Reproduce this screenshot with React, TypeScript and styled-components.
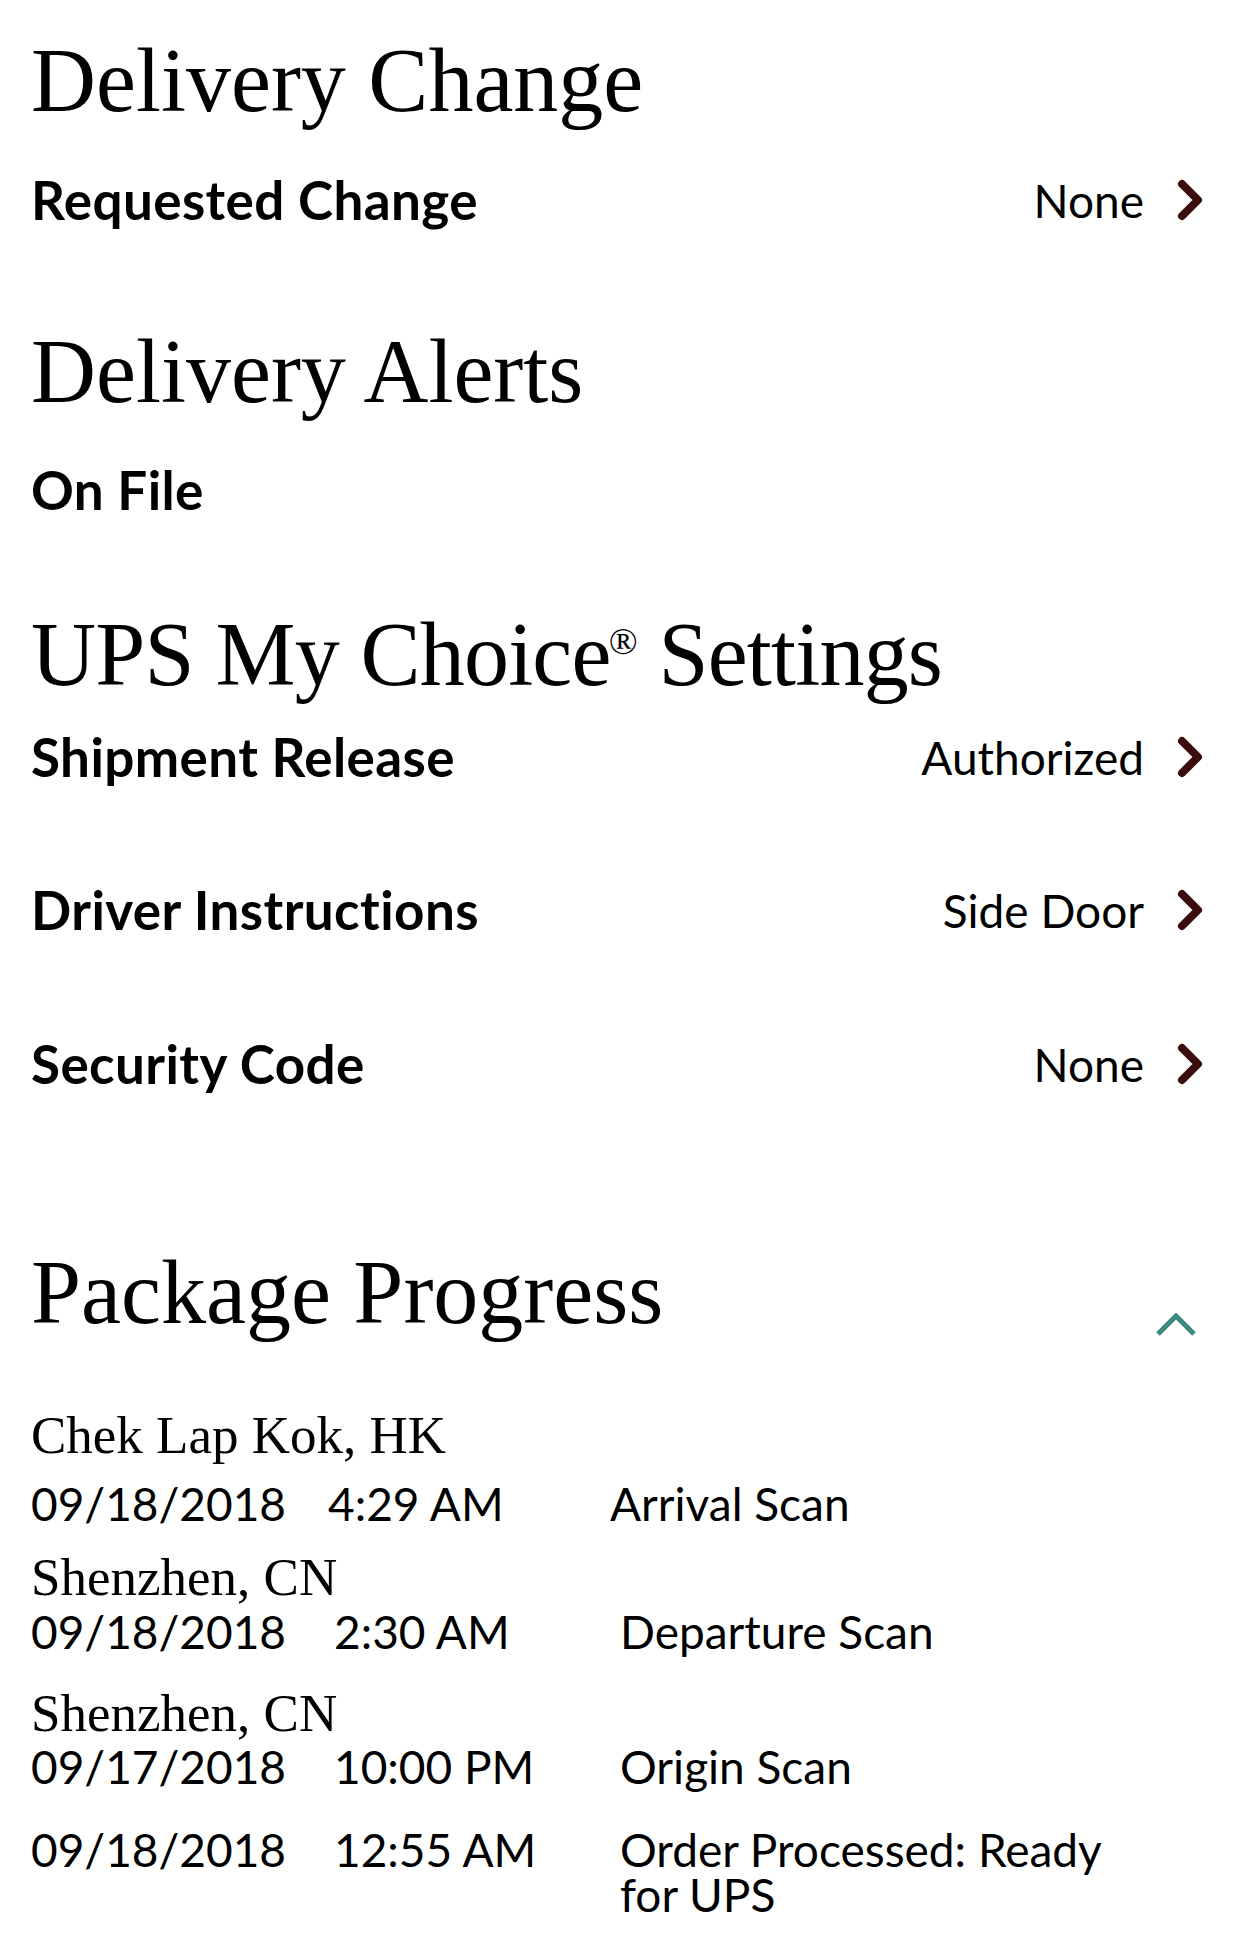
import styled, { createGlobalStyle } from "styled-components";

const GlobalStyle = createGlobalStyle`
  body {
    margin: 0;
    background: #ffffff;
    color: #000000;
  }
`;

const Page = styled.div`
  display: flex;
  flex-direction: column;
  padding: 36px 39px 0 31px;
  width: 1242px;
  box-sizing: border-box;
`;

const Heading = styled.h2<{ $top?: number; $tight?: boolean }>`
  margin: ${({ $top }) => $top ?? 0}px 0 0;
  font-family: "Liberation Serif", "Times New Roman", serif;
  font-weight: 400;
  font-size: 90px;
  line-height: 90px;
  letter-spacing: ${({ $tight }) => ($tight ? "-0.8px" : "0")};
`;

const Reg = styled.span`
  font-size: 38px;
  line-height: 0;
  vertical-align: 31px;
  margin-left: -2px;
`;

const Row = styled.div<{ $top: number }>`
  display: flex;
  align-items: center;
  justify-content: space-between;
  margin-top: ${({ $top }) => $top}px;
`;

const Label = styled.div`
  font-family: Lato, "Open Sans", sans-serif;
  font-weight: 700;
  font-size: 53px;
  line-height: 62px;
  letter-spacing: 0.4px;
`;

const Value = styled.div`
  display: flex;
  align-items: center;
  gap: 33px;
  font-family: Lato, "Open Sans", sans-serif;
  font-size: 46px;
  line-height: 55px;
`;

const ProgressHeader = styled.div<{ $top: number }>`
  display: flex;
  align-items: flex-end;
  justify-content: space-between;
  margin-top: ${({ $top }) => $top}px;
`;

const Toggle = styled.svg`
  margin: 0 6px 1px 0;
`;

const Group = styled.div<{ $top: number }>`
  display: flex;
  flex-direction: column;
  margin-top: ${({ $top }) => $top}px;
`;

const Location = styled.div`
  font-family: "Liberation Serif", "Times New Roman", serif;
  font-size: 53px;
  line-height: 53px;
`;

const Event = styled.div<{ $top: number; $cols: [number, number] }>`
  display: grid;
  grid-template-columns: ${({ $cols }) => `${$cols[0]}px ${$cols[1]}px 1fr`};
  margin-top: ${({ $top }) => $top}px;
  padding-right: 60px;
  font-family: Lato, "Open Sans", sans-serif;
  font-size: 46px;
  line-height: 45px;
`;

const Chevron = () => (
  <svg width="26" height="42" viewBox="0 0 26 42">
    <polyline
      points="5,5 21,21 5,37"
      fill="none"
      stroke="#3a0c0c"
      strokeWidth="8"
      strokeLinecap="round"
      strokeLinejoin="round"
    />
  </svg>
);

const settings = [
  { label: "Shipment Release", value: "Authorized", top: 26 },
  { label: "Driver Instructions", value: "Side Door", top: 91 },
  { label: "Security Code", value: "None", top: 92 },
];

const groups: {
  location: string;
  top: number;
  lead: number;
  cols: [number, number];
  events: string[][];
}[] = [
  {
    location: "Chek Lap Kok, HK",
    top: 71,
    lead: 19,
    cols: [297, 282],
    events: [["09/18/2018", "4:29 AM", "Arrival Scan"]],
  },
  {
    location: "Shenzhen, CN",
    top: 25,
    lead: 5,
    cols: [303, 286],
    events: [["09/18/2018", "2:30 AM", "Departure Scan"]],
  },
  {
    location: "Shenzhen, CN",
    top: 33,
    lead: 4,
    cols: [303, 286],
    events: [
      ["09/17/2018", "10:00 PM", "Origin Scan"],
      ["09/18/2018", "12:55 AM", "Order Processed: Ready for UPS"],
    ],
  },
];

export default function App() {
  return (
    <>
      <GlobalStyle />
      <Page>
        <Heading>Delivery Change</Heading>
        <Row $top={43}>
          <Label>Requested Change</Label>
          <Value>
            None
            <Chevron />
          </Value>
        </Row>

        <Heading $top={96}>Delivery Alerts</Heading>
        <Row $top={42}>
          <Label>On File</Label>
        </Row>

        <Heading $top={89} $tight>
          UPS My Choice<Reg>®</Reg> Settings
        </Heading>
        {settings.map((s) => (
          <Row $top={s.top} key={s.label}>
            <Label>{s.label}</Label>
            <Value>
              {s.value}
              <Chevron />
            </Value>
          </Row>
        ))}

        <ProgressHeader $top={153}>
          <Heading>Package Progress</Heading>
          <Toggle width="42" height="24" viewBox="0 0 42 24">
            <polyline
              points="3,21 21,3 39,21"
              fill="none"
              stroke="#3d8a81"
              strokeWidth="5"
            />
          </Toggle>
        </ProgressHeader>

        {groups.map((g, gi) => (
          <Group $top={g.top} key={gi}>
            <Location>{g.location}</Location>
            {g.events.map((e, i) => (
              <Event $top={i === 0 ? g.lead : 38} $cols={g.cols} key={i}>
                <span>{e[0]}</span>
                <span>{e[1]}</span>
                <span>{e[2]}</span>
              </Event>
            ))}
          </Group>
        ))}
      </Page>
    </>
  );
}
